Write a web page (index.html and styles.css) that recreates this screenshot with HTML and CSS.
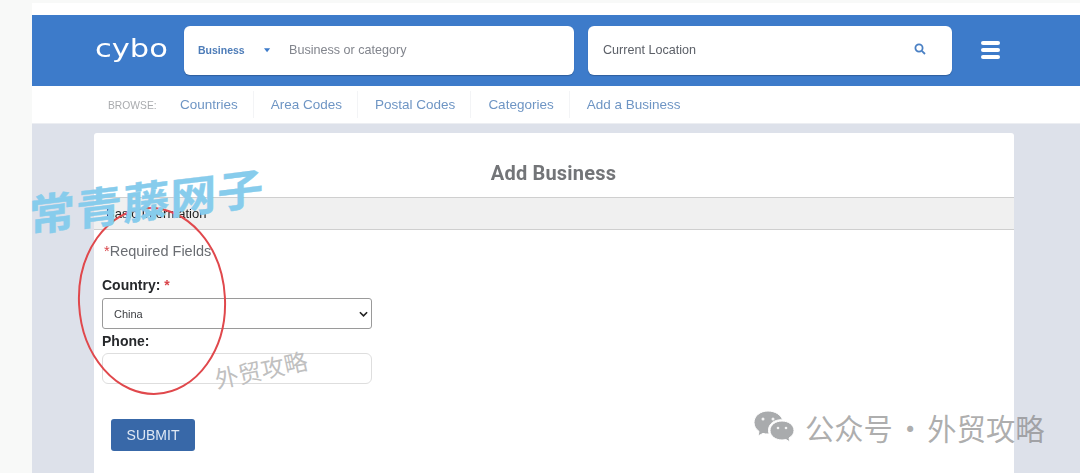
FILE: index.html
```html
<!DOCTYPE html>
<html lang="en">
<head>
<meta charset="utf-8">
<title>Add Business</title>
<link rel="stylesheet" href="styles.css">
</head>
<body>
<div class="shell">
  <header class="topbar">
    <div class="logo"><span class="logo-text">cybo</span></div>
    <div class="searchbox what">
      <span class="scope">Business</span>
      <svg class="caret" viewBox="0 0 8 5" aria-hidden="true"><path d="M0 0h7L3.500 4.500z"/></svg>
      <span class="field">Business or category</span>
    </div>
    <div class="searchbox where">
      <span class="field dark">Current Location</span>
      <svg class="lens" viewBox="0 0 12 12" aria-hidden="true"><circle cx="5" cy="5" r="3.600"/><path d="M7.800 7.800L11 11"/></svg>
    </div>
    <div class="burger"><i></i><i></i><i></i></div>
  </header>
  <nav class="browse">
    <span class="browse-label">BROWSE:</span>
    <a class="browse-link first">Countries</a>
    <a class="browse-link">Area Codes</a>
    <a class="browse-link">Postal Codes</a>
    <a class="browse-link">Categories</a>
    <a class="browse-link">Add a Business</a>
  </nav>
  <main class="content">
    <section class="card">
      <h1 class="card-title">Add Business</h1>
      <div class="band">Basic Information</div>
      <form class="form">
        <p class="required"><span class="star">*</span>Required Fields</p>
        <label class="label country">Country: <span class="star">*</span></label>
        <div class="select">
          <span>China</span>
          <svg class="chev" viewBox="0 0 10 6" aria-hidden="true"><path d="M1 1l4 4 4-4"/></svg>
        </div>
        <label class="label phone">Phone:</label>
        <div class="input"></div>
        <div class="submit">SUBMIT</div>
      </form>
    </section>
  </main>
</div>

<svg class="ring" viewBox="0 0 160 200" aria-hidden="true"><ellipse cx="80" cy="100" rx="73" ry="93" transform="rotate(-3 80 100)"/></svg>
<div class="mark-blue">常青藤网子</div>
<div class="mark-gray">外贸攻略</div>
<div class="credit">
  <svg class="wechat" viewBox="0 0 42 34" aria-hidden="true">
    <path class="bub" d="M15 1C7 1 1 6 1 12.500c0 3.700 2 6.800 5 8.900L5 26l5-2.600c1.600.4 3.200.6 5 .6h1.200c-.5-1.300-.7-2.500-.7-3.700C15.500 14 21 9.700 28.500 9.700h1C27.800 4.700 22 1 15 1z"/>
    <path class="bub" d="M41 20.500c0-5.600-5.600-9.500-12-9.500s-12 3.900-12 9.500S22.600 30 29 30c1.400 0 2.700-.2 3.900-.5L37 32l-1-4c3-1.800 5-4.300 5-7.500z"/>
    <circle class="eye" cx="10" cy="9" r="1.500"/><circle class="eye" cx="20" cy="9" r="1.500"/>
    <circle class="eye" cx="25" cy="18" r="1.300"/><circle class="eye" cx="33" cy="18" r="1.300"/>
  </svg>
  <span class="credit-text">公众号 · 外贸攻略</span>
</div>
</body>
</html>
```
FILE: styles.css
```css
html, body { margin: 0; padding: 0; height: 473px; overflow: hidden; }
body {
  position: relative;
  background: #f8f9f8;
  font-family: "Liberation Sans", Arial, sans-serif;
}
.shell {
  margin-left: 32px;
  padding-top: 3px;
  height: 470px;
  display: flex;
  flex-direction: column;
  background: #f8f9f8;
  filter: blur(0.45px);
}
.topbar {
  border-top: 12px solid #fff;
  height: 71px;
  flex: none;
  background: #3d7bca;
  display: flex;
  align-items: center;
  padding-left: 63px;
}
.logo {
  width: 89px;
  flex: none;
  color: #fff;
  margin-top: -3px;
}
.logo-text {
  display: inline-block;
  font: 400 24px/1 "DejaVu Sans", sans-serif;
  letter-spacing: 0;
  transform: scaleX(1.27);
  transform-origin: 0 50%;
}
.searchbox {
  height: 49px;
  background: #fff;
  border-radius: 6px;
  box-shadow: 0 1px 1px #2f5f9e;
  display: flex;
  align-items: center;
  box-sizing: border-box;
  flex: none;
  margin-top: -1px;
}
.what { width: 390px; padding-left: 14px; }
.where { width: 364px; margin-left: 14px; padding-left: 15px; justify-content: space-between; padding-right: 26px; }
.scope { color: #4d7cb8; font-size: 10.500px; font-weight: 700; width: 66px; }
.caret { width: 7px; height: 5px; fill: #3d7bca; margin-right: 18px; }
.field { font-size: 12.600px; color: #82858d; }
.field.dark { color: #5c6068; }
.lens { width: 12px; height: 12px; fill: none; stroke: #4a80c4; stroke-width: 1.800; margin-top: -2px; }
.burger {
  margin-left: 29px;
  width: 19px;
  display: flex;
  flex-direction: column;
  gap: 3px;
  margin-top: -1px;
}
.burger i { display: block; height: 4px; border-radius: 2px; background: #fff; }
.browse {
  height: 38px;
  flex: none;
  background: #fff;
  display: flex;
  align-items: center;
  border-bottom: 1px solid #eceef2;
  box-sizing: border-box;
  padding-left: 76px;
}
.browse-label { font-size: 10.300px; color: #a9abae; width: 55px; flex: none; margin-top: 1px; }
.browse-link {
  font-size: 13.500px;
  color: #6e95c4;
  padding: 0 15px 0 17px;
  border-right: 1px solid #f3f4f6;
  line-height: 27px;
}
.browse-link.first { padding-left: 17px; }
.browse-link:last-child { border-right: 0; }
.content {
  flex: 1;
  background: #dde1ea;
  padding: 9px 66px 0 62px;
  min-height: 0;
  overflow: hidden;
}
.card {
  background: #fff;
  height: 100%;
  border-radius: 3px 3px 0 0;
}
.card-title {
  margin: 0;
  height: 64px;
  box-sizing: border-box;
  padding-top: 29px;
  text-align: center;
  font: 700 20px/22px Roboto, sans-serif;
  color: #737578;
  letter-spacing: 0.2px;
  padding-right: 1px;
}
.band {
  height: 33px;
  box-sizing: border-box;
  background: #f0f0f0;
  border-top: 1px solid #cfcfcf;
  border-bottom: 1px solid #cfcfcf;
  color: #222;
  font-size: 13px;
  line-height: 31px;
  padding-left: 12px;
}
.form { padding: 12px 0 0 8px; width: 270px; }
.required { margin: 0; font-size: 14.500px; line-height: 18px; color: #6a6d72; padding-left: 2px; }
.star { color: #d9454a; }
.label { display: block; font-size: 14px; font-weight: 700; color: #26282b; line-height: 18px; }
.country { margin-top: 16px; }
.select {
  margin-top: 4px;
  height: 31px;
  box-sizing: border-box;
  border: 1px solid #9a9a9a;
  border-radius: 3px;
  display: flex;
  align-items: center;
  justify-content: space-between;
  padding: 0 3px 0 11px;
  font-size: 11px;
  color: #3c3e42;
}
.chev { width: 9px; height: 6px; fill: none; stroke: #222; stroke-width: 1.800; }
.phone { margin-top: 3px; }
.input {
  margin-top: 3px;
  height: 31px;
  box-sizing: border-box;
  border: 1px solid #dedede;
  border-radius: 6px;
}
.submit {
  margin: 35px 0 0 9px;
  width: 84px;
  height: 32px;
  background: #3868a8;
  border-radius: 3px;
  color: #dfe8f4;
  font-size: 14px;
  line-height: 32px;
  text-align: center;
}
.ring {
  position: absolute;
  left: 72px;
  top: 201px;
  width: 160px;
  height: 200px;
  fill: none;
  stroke: #e0484c;
  stroke-width: 2;
}
.mark-blue {
  position: absolute;
  left: 29px;
  top: 188px;
  font: 700 43px/50px "Noto Sans CJK SC", sans-serif;
  color: #87ccec;
  letter-spacing: 1px;
  -webkit-text-stroke: 0.4px #87ccec;
  transform: skewY(-7deg) scaleX(1.070);
  transform-origin: 0 50%;
  white-space: nowrap;
}
.mark-gray {
  position: absolute;
  left: 214px;
  top: 354px;
  font: 400 23.500px/30px "Noto Sans CJK SC", sans-serif;
  color: #c0c0c0;
  transform: rotate(-12deg);
  white-space: nowrap;
}
.credit {
  position: absolute;
  left: 753px;
  top: 407px;
  display: flex;
  align-items: center;
  gap: 10px;
  font: 400 29.300px/40px "Noto Sans CJK SC", sans-serif;
  color: rgba(120, 120, 120, 0.6);
  white-space: nowrap;
}
.credit-text { word-spacing: -4px; }
.wechat { width: 42px; height: 34px; }
.bub { fill: #a9abad; stroke: #fff; stroke-width: 1; }
.eye { fill: #f2f2f2; }
```
